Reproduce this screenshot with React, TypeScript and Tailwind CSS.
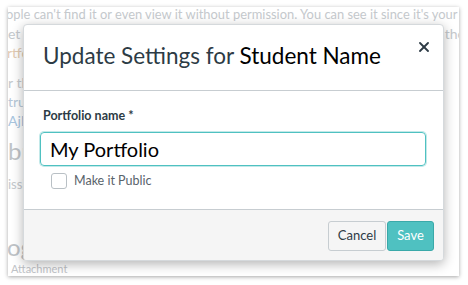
import React from 'react';

const BackgroundPage: React.FC = () => (
  <div className="absolute left-[8px] top-[7px] w-[451px] h-[269px] bg-white overflow-hidden shadow-[0_1px_4px_rgba(0,0,0,0.35)]">
    <div className="flex flex-col text-[#c5c9cd] text-[14px] leading-[19px] whitespace-nowrap">
      <p className="-ml-[2px] mt-[-2px] text-[12.9px]">ople can't find it or even view it without permission. You can see it since it's your portfolio.</p>
      <div className="flex justify-between">
        <p>et a</p>
        <p className="-mr-[6px]">o the</p>
      </div>
      <p className="-ml-[1px] text-[#e3cbb2]">rtfo</p>
      <p className="mt-[11px]">r th</p>
      <p className="text-[#b6c8d8]">truc</p>
      <p className="text-[#a9c6df]">AjN</p>
      <p className="mt-[6px] text-[24px] leading-[30px] text-[#c0c4c8]">br</p>
      <p className="mt-[9px] text-[13px] leading-[18px]">issi</p>
      <p className="mt-[40px] text-[24px] leading-[28px] -ml-[1px] text-[#c0c4c8]">og</p>
      <p className="mt-[1px] text-[11px] leading-[14px] text-[#bfc3c7] ml-[3px]">Attachment</p>
    </div>
  </div>
);

const SettingsModal: React.FC = () => (
  <div className="absolute left-[23px] top-[24px] w-[421px] h-[237px] bg-white rounded-[4px] shadow-[0_3px_12px_rgba(0,0,0,0.3)] flex flex-col overflow-hidden border border-[#d5d9dc]">
    {/* Header */}
    <div className="h-[66px] flex items-center justify-between border-b border-[#c7cdd1] pl-[19px] pr-[11px]">
      <h2 className="text-[22.5px] leading-none text-[#2d3b45] mt-[-2px]">
        Update Settings for <span className="text-black">Student Name</span>
      </h2>
      <button className="self-start mt-[14px] text-[#2d3b45] w-[16px] h-[16px] flex items-center justify-center" aria-label="Close">
        <svg width="10" height="10" viewBox="0 0 10 10" stroke="currentColor" strokeWidth="1.8" strokeLinecap="round">
          <line x1="1" y1="1" x2="9" y2="9" />
          <line x1="9" y1="1" x2="1" y2="9" />
        </svg>
      </button>
    </div>

    {/* Body */}
    <div className="flex-1 flex flex-col pl-[16px] pr-[17px] pt-[17px]">
      <label className="text-[12.5px] font-bold leading-[16px] text-[#2d3b45] pl-[3px]">Portfolio name *</label>
      <div className="mt-[8px] h-[34px] w-[386px] rounded-[4px] border border-[#4fc1c1] shadow-[0_0_0_1px_rgba(79,193,193,0.35)] flex items-center pl-[9px]">
        <span className="text-[20px] leading-none text-black">My Portfolio</span>
      </div>
      <div className="mt-[7px] ml-[11px] flex items-center gap-[7px]">
        <span className="w-[16px] h-[16px] rounded-[3px] border border-[#b9c0c5] bg-white" />
        <span className="text-[12.5px] leading-[16px] text-[#59636b]">Make it Public</span>
      </div>
    </div>

    {/* Footer */}
    <div className="h-[51px] bg-[#f5f5f5] border-t border-[#c7cdd1] flex items-center justify-end pr-[9px] pt-[1px]">
      <button className="h-[30px] w-[58px] rounded-[3px] border border-[#c7cdd1] bg-[#f5f5f5] text-[13px] text-[#2d3b45]">Cancel</button>
      <button className="h-[30px] w-[47px] ml-[1px] rounded-[3px] border border-[#3aa9a9] bg-[#4fc1c1] text-[13px] text-white">Save</button>
    </div>
  </div>
);

export default function App() {
  return (
    <div className="relative w-[468px] h-[285px] bg-white overflow-hidden" style={{ fontFamily: 'Lato, "Open Sans", sans-serif' }}>
      <BackgroundPage />
      <SettingsModal />
    </div>
  );
}
